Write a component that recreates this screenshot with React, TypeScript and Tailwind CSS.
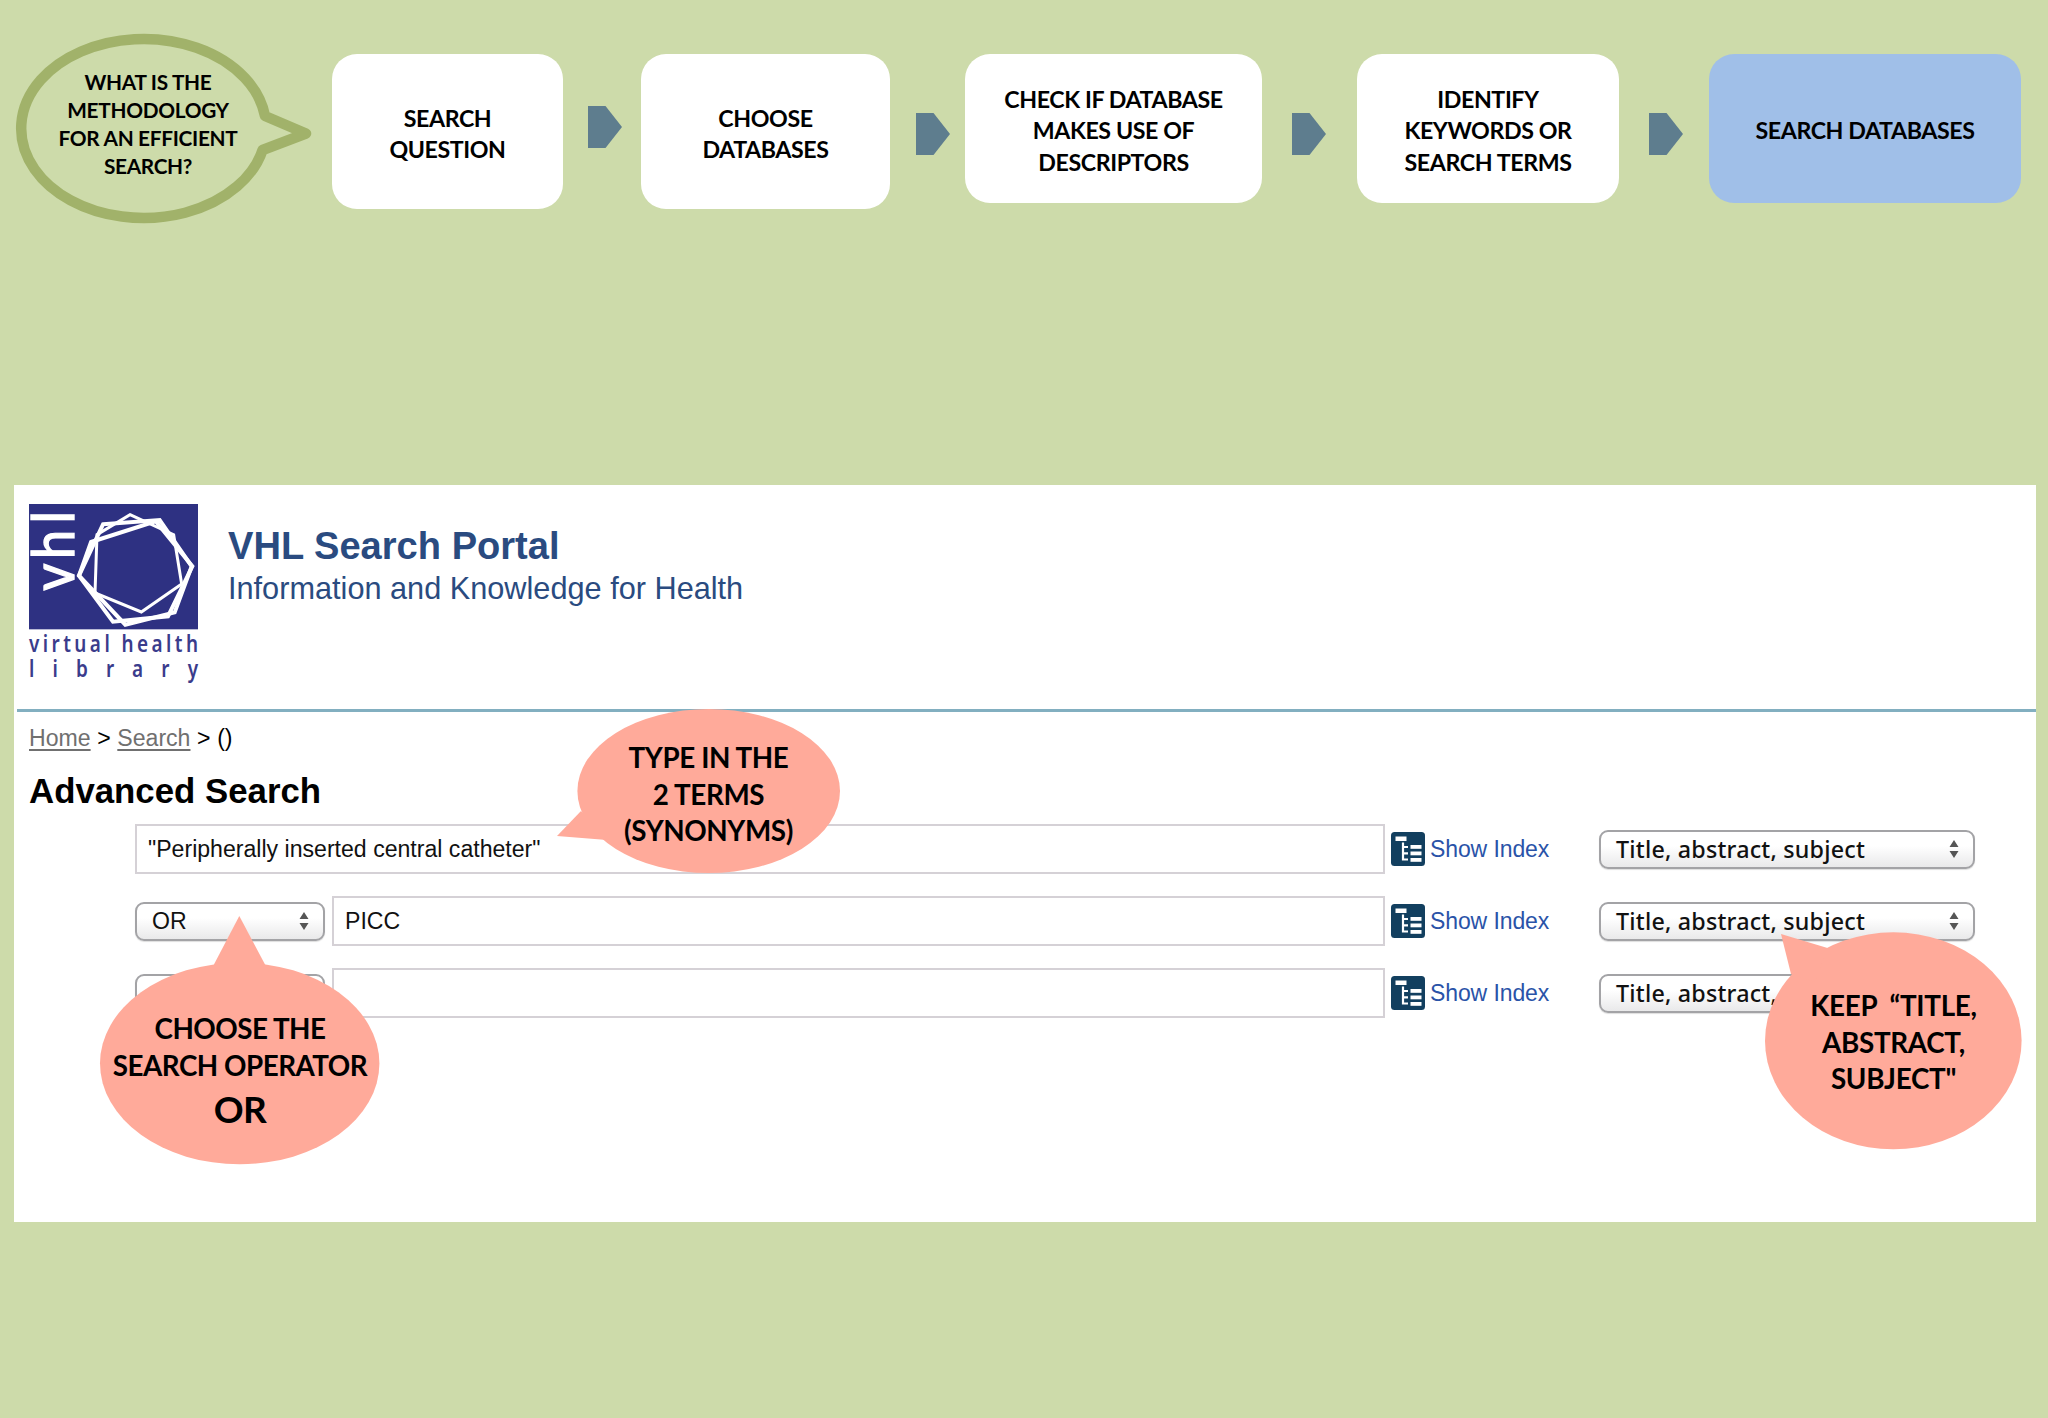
import React from 'react';

interface StepProps {
  lines: string[];
  className: string;
}

interface CalloutProps {
  className: string;
  path: string;
  ellipse: [number, number, number, number];
  children: React.ReactNode;
}

const Step: React.FC<StepProps> = ({ lines, className }) => (
  <div
    className={`flex shrink-0 flex-col items-center justify-center rounded-[25px] pt-[5px] font-['Lato',sans-serif] text-[23.2px] leading-[31.5px] font-bold tracking-[-0.4px] whitespace-nowrap text-black ${className}`}
  >
    {lines.map((line) => (
      <span key={line}>{line}</span>
    ))}
  </div>
);

const Arrow: React.FC<{ className: string }> = ({ className }) => (
  <svg className={`h-[42px] w-[34px] shrink-0 ${className}`} viewBox="0 0 34 42">
    <path d="M0 0H17.5L34 21L17.5 42H0Z" fill="#5e7d8e" />
  </svg>
);

const Callout: React.FC<CalloutProps> = ({ className, path, ellipse, children }) => (
  <div
    className={`absolute font-['Lato',sans-serif] text-[27.8px] leading-[36.7px] font-bold text-black ${className}`}
  >
    <svg className="absolute inset-0 h-full w-full overflow-visible" fill="#ffaa9a">
      <ellipse cx={ellipse[0]} cy={ellipse[1]} rx={ellipse[2]} ry={ellipse[3]} />
      <path d={path} />
    </svg>
    <div className="relative flex flex-col items-center whitespace-pre">{children}</div>
  </div>
);

const Chevrons = () => (
  <svg className="h-[18px] w-[10px]" viewBox="0 0 10 18" fill="#555">
    <path d="M5 0L9.5 7H.5ZM5 18L9.5 11H.5Z" />
  </svg>
);

const Select: React.FC<{ label: string; className: string }> = ({ label, className }) => (
  <div
    className={`flex h-[39px] shrink-0 items-center justify-between rounded-[9px] border-2 border-[#a3a3a6] bg-linear-to-b from-white from-40% to-[#e9e9ea] pr-[14px] pl-[15px] whitespace-nowrap text-[#111] shadow-[0_1px_1px_#00000022] ${className}`}
  >
    <span>{label}</span>
    <Chevrons />
  </div>
);

const IndexIcon = () => (
  <svg className="h-[34px] w-[34px]" viewBox="0 0 34 34">
    <rect width="34" height="34" rx="3.5" fill="#123f5f" />
    <g fill="#fff">
      <rect x="4.5" y="4.5" width="11" height="4.5" />
      <rect x="19.5" y="13" width="11" height="3.8" />
      <rect x="19.5" y="19.5" width="11" height="3.8" />
      <rect x="19.5" y="26" width="11" height="3.8" />
    </g>
    <path d="M12 10.5V27.5H17M12 15H17M12 21.3H17" fill="none" stroke="#fff" strokeWidth="2.2" />
  </svg>
);

const Logo = () => (
  <svg className="h-[184px] w-[170px] shrink-0 overflow-visible" viewBox="0 0 510 552">
    <rect width="507" height="376" fill="#2e3182" />
    <g fill="none" stroke="#fff" strokeWidth="12">
      <path d="M222 61L392 48L488 187L437 325L289 362L150 215Z" />
      <path d="M186 114L380 52L490 187L417 337L252 353L150 215Z" />
      <path d="M303 32L434 92L458 240L337 324L198 267L204 92Z" strokeWidth="9" />
    </g>
    <g
      transform="translate(134 260) rotate(-90) scale(.9 1)"
      fill="#fff"
      stroke="#fff"
      strokeWidth="4"
      fontFamily="Lato, sans-serif"
      fontSize="176"
    >
      <text x="0">v</text>
      <text x="105">h</text>
      <text x="224">l</text>
    </g>
    <g fill="#3a3c8c" fontFamily="'Noto Sans', sans-serif" fontSize="71" fontWeight="600">
      <text transform="translate(0 444) scale(.8 1)" textLength="634">virtual health</text>
      <text transform="translate(0 519) scale(.8 1)" textLength="634">library</text>
    </g>
  </svg>
);

const rows = [
  { operator: null, term: '"Peripherally inserted central catheter"' },
  { operator: 'OR', term: 'PICC' },
  { operator: '', term: '' },
];

export default function App() {
  return (
    <div className="relative h-[1418px] w-[2048px] overflow-hidden bg-[#cddbaa]">
      <header className="flex h-[485px] items-start pt-[54px]">
        <div className="relative -mt-[54px] h-[240px] w-[332px] shrink-0">
          <svg className="absolute inset-0 h-full w-full" viewBox="0 0 332 240">
            <path
              d="M265 116L306 133.5L262.6 150A122.5 89.5 0 1 1 265 116Z"
              fill="none"
              stroke="#a1b26a"
              strokeWidth="10.5"
              strokeLinejoin="round"
            />
          </svg>
          <div className="relative flex w-[296px] flex-col items-center pt-[68px] font-['Lato',sans-serif] text-[20.8px] leading-[28px] font-bold tracking-[-0.3px] whitespace-nowrap text-black">
            <span>WHAT IS THE</span>
            <span>METHODOLOGY</span>
            <span>FOR AN EFFICIENT</span>
            <span>SEARCH?</span>
          </div>
        </div>
        <Step className="h-[155px] w-[231px] bg-white" lines={['SEARCH', 'QUESTION']} />
        <Arrow className="mt-[52px] ml-[25px]" />
        <Step className="ml-[19px] h-[155px] w-[249px] bg-white" lines={['CHOOSE', 'DATABASES']} />
        <Arrow className="mt-[59px] ml-[26px]" />
        <Step className="ml-[15px] h-[149px] w-[297px] bg-white" lines={['CHECK IF DATABASE', 'MAKES USE OF', 'DESCRIPTORS']} />
        <Arrow className="mt-[59px] ml-[30px]" />
        <Step className="ml-[31px] h-[149px] w-[262px] bg-white" lines={['IDENTIFY', 'KEYWORDS OR', 'SEARCH TERMS']} />
        <Arrow className="mt-[59px] ml-[30px]" />
        <Step className="ml-[26px] h-[149px] w-[312px] bg-[#a0bfe8]" lines={['SEARCH DATABASES']} />
      </header>

      <main className="ml-[14px] h-[737px] w-[2022px] bg-white pt-[19px] font-['Liberation_Sans',Arial,sans-serif] text-[23.1px]">
        <div className="flex h-[205px] pl-[15px]">
          <Logo />
          <div className="ml-[29px] text-[#2a4b80]">
            <h1 className="mt-[20px] text-[38.1px] leading-[44px] font-bold">VHL Search Portal</h1>
            <p className="mt-[1px] text-[30.7px] leading-[40px]">Information and Knowledge for Health</p>
          </div>
        </div>
        <div className="ml-[3px] h-[3px] bg-[#82afc0]" />

        <div className="mt-[12px] flex h-[28px] gap-[6.6px] pl-[15px] leading-[28px] text-black">
          <a className="text-[#707070] underline decoration-2 underline-offset-3">Home</a>
          <span>&gt;</span>
          <a className="text-[#707070] underline decoration-2 underline-offset-3">Search</a>
          <span>&gt;</span>
          <span>()</span>
        </div>
        <h2 className="mt-[17px] h-[55px] pl-[15px] text-[34.8px] leading-[44px] font-bold text-black">Advanced Search</h2>

        <div className="flex flex-col gap-[22px] pl-[121px]">
          {rows.map((row, i) => (
            <div key={i} className="flex h-[50px] items-center">
              {row.operator !== null && <Select label={row.operator} className="mr-[7px] w-[190px]" />}
              <div
                className={`flex h-[50px] items-center border-2 border-[#d5d1d6] pt-px pl-[11px] text-[#111] ${
                  row.operator === null ? 'w-[1250px]' : 'w-[1053px]'
                }`}
              >
                {row.term}
              </div>
              <a className="ml-[6px] flex w-[208px] items-center gap-[5px] text-[23px] tracking-[-0.1px] text-[#2a53a8]">
                <IndexIcon />
                Show Index
              </a>
              <Select
                label="Title, abstract, subject"
                className="w-[376px] font-['Noto_Sans',sans-serif] text-[23.3px] font-medium tracking-[0.2px]"
              />
            </div>
          ))}
        </div>
      </main>

      <Callout
        className="top-[709px] left-[557px] h-[164px] w-[303px] pt-[31px] tracking-[-0.4px]"
        path="M24 102L0 127L50 131Z"
        ellipse={[151.7, 82, 131.3, 82]}
      >
        <span>TYPE IN THE</span>
        <span>2 TERMS</span>
        <span>(SYNONYMS)</span>
      </Callout>

      <Callout
        className="top-[916px] left-[100px] h-[249px] w-[280px] pt-[95px] tracking-[-0.5px]"
        path="M110 56L139.3 0L169 56Z"
        ellipse={[139.7, 147.5, 139.7, 100.8]}
      >
        <span>CHOOSE THE</span>
        <span>SEARCH OPERATOR</span>
        <span className="mt-px text-[37px] leading-[48px]">OR</span>
      </Callout>

      <Callout
        className="top-[932px] left-[1765px] h-[218px] w-[257px] pt-[56px] tracking-[-0.3px]"
        path="M16 2L62.5 16L50 50L26 42Z"
        ellipse={[128.3, 108.8, 128.3, 108.5]}
      >
        <span>KEEP  “TITLE,</span>
        <span>ABSTRACT,</span>
        <span>SUBJECT"</span>
      </Callout>
    </div>
  );
}
